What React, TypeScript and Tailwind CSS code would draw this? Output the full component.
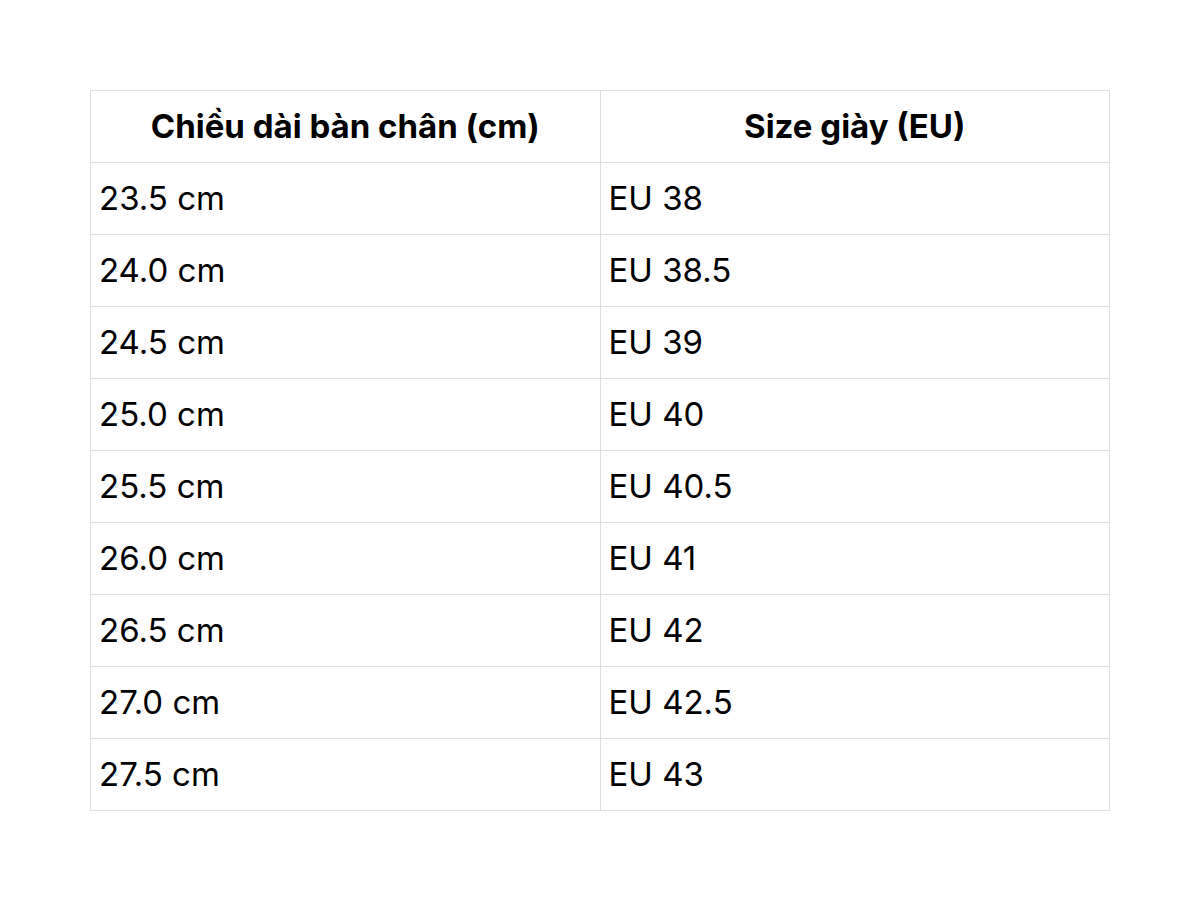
import React from "react";

const rows: [string, string][] = [
  ["23.5 cm", "EU 38"],
  ["24.0 cm", "EU 38.5"],
  ["24.5 cm", "EU 39"],
  ["25.0 cm", "EU 40"],
  ["25.5 cm", "EU 40.5"],
  ["26.0 cm", "EU 41"],
  ["26.5 cm", "EU 42"],
  ["27.0 cm", "EU 42.5"],
  ["27.5 cm", "EU 43"],
];

export default function App() {
  return (
    <div className="w-[1200px] h-[900px] bg-white p-[90px] font-['Inter',sans-serif] text-black">
      <table className="w-[1020px] border-collapse table-fixed">
        <thead>
          <tr className="h-[72px]">
            <th className="border border-[#dddddd] text-center font-bold text-[33px] px-[8px]">Chiều dài bàn chân (cm)</th>
            <th className="border border-[#dddddd] text-center font-bold text-[33px] px-[8px]">Size giày (EU)</th>
          </tr>
        </thead>
        <tbody>
          {rows.map(([a, b]) => (
            <tr key={a} className="h-[72px]">
              <td className="border border-[#dddddd] text-left text-[33px] px-[8px]">{a}</td>
              <td className="border border-[#dddddd] text-left text-[33px] px-[8px]">{b}</td>
            </tr>
          ))}
        </tbody>
      </table>
    </div>
  );
}
